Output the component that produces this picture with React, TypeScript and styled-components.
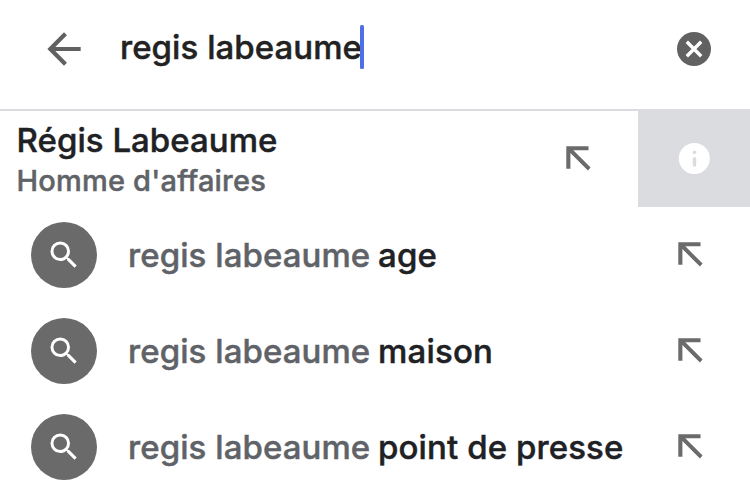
import React from 'react';
import styled, { createGlobalStyle } from 'styled-components';

const GlobalStyle = createGlobalStyle`
  * { box-sizing: border-box; }
  body { margin: 0; background: #fff; overflow: hidden; }
`;

const Screen = styled.main`
  width: 750px;
  height: 503px;
  background: #fff;
  color: #202124;
  font-family: Inter, 'Liberation Sans', sans-serif;
  font-size: 33px;
  font-weight: 500;
  -webkit-text-stroke: 0.45px currentColor;
`;

const SearchBar = styled.header`
  display: flex;
  align-items: flex-start;
  height: 111px;
  padding: 24px 36px 0 39px;
  border-bottom: 2px solid #dadce0;
`;

const IconButton = styled.button`
  display: flex;
  flex: none;
  padding: 0;
  border: 0;
  background: none;
`;

const ClearButton = styled(IconButton)`
  margin-top: 5px;
`;

const Query = styled.div`
  display: flex;
  flex: 1;
  align-items: center;
  height: 44px;
  margin: 1px 0 0 31px;
  color: #222;
  line-height: 44px;
  white-space: nowrap;
`;

const QueryText = styled.span`
  width: 240px;
  letter-spacing: 0.05px;
`;

const Caret = styled.span`
  position: relative;
  width: 4px;
  height: 44px;
  border-radius: 1.5px;
  background: #4f6fe6;
`;

const Row = styled.div`
  display: flex;
  align-items: center;
  height: 96px;
`;

const EntityText = styled.div`
  flex: 1;
  padding: 2px 0 0 16.5px;
  white-space: nowrap;
`;

const EntityName = styled.div`
  line-height: 42px;
  letter-spacing: 0.04px;
`;

const EntityKind = styled.div`
  color: #5f6368;
  font-size: 29px;
  line-height: 40px;
  letter-spacing: 0.2px;
`;

const InfoButton = styled.button`
  display: flex;
  align-items: center;
  justify-content: center;
  width: 112px;
  height: 96px;
  margin-left: 46px;
  padding: 0;
  border: 0;
  background: #dadce0;
`;

const SuggestionRow = styled(Row)`
  padding: 0 46px 0 31px;
`;

const Disc = styled.span`
  display: flex;
  flex: none;
  align-items: center;
  justify-content: center;
  width: 66px;
  height: 66px;
  border-radius: 50%;
  background: #6a6a6a;
`;

const SuggestionText = styled.div`
  display: flex;
  flex: 1;
  margin-left: 31px;
  line-height: 44px;
  white-space: pre;
`;

const Typed = styled.span`
  width: 250px;
  color: #5f6368;
  letter-spacing: 0.07px;
`;

const Completion = styled.span<{ $tracking: number }>`
  letter-spacing: ${(p) => p.$tracking}px;
`;

const InsertArrow = () => (
  <svg width="26" height="26" viewBox="0 0 26 26">
    <path fill="#6b6b6b" d="M.3 .3h22.2v4H7.3l17.3 17.3-2.7 2.8L4.4 7.1v15.7H.3z" />
  </svg>
);

const BackArrow = () => (
  <svg width="50" height="50" viewBox="0 0 24 24">
    <path fill="#616161" d="M20 11H7.83l5.59-5.59L12 4l-8 8 8 8 1.41-1.41L7.83 13H20v-2z" />
  </svg>
);

const ClearIcon = () => (
  <svg width="40" height="40" viewBox="0 0 40 40">
    <circle cx="20" cy="20" r="17" fill="#616161" />
    <path d="M12.8 12.8l14.4 14.4M27.2 12.8L12.8 27.2" stroke="#fff" strokeWidth="3.4" />
  </svg>
);

const SearchIcon = () => (
  <svg width="36" height="36" viewBox="0 0 24 24">
    <path
      fill="#fff"
      d="M15.5 14h-.79l-.28-.27A6.47 6.47 0 0 0 16 9.5 6.5 6.5 0 1 0 9.5 16c1.61 0 3.09-.59 4.23-1.57l.27.28v.79l5 4.99L20.49 19l-4.99-5zm-6 0C7.01 14 5 11.99 5 9.5S7.01 5 9.5 5 14 7.01 14 9.5 11.99 14 9.5 14z"
    />
  </svg>
);

const InfoIcon = () => (
  <svg width="32" height="32" viewBox="0 0 32 32">
    <circle cx="16.3" cy="15.5" r="15.5" fill="#fff" />
    <circle cx="16.5" cy="9.3" r="1.8" fill="#dadce0" />
    <path d="M16.5 15.8v6.2" stroke="#dadce0" strokeWidth="3.4" strokeLinecap="round" />
  </svg>
);

const suggestions = [
  { text: 'age', tracking: 0.2 },
  { text: 'maison', tracking: 0.2 },
  { text: 'point de presse', tracking: 0.1 },
];

export default function App() {
  return (
    <Screen>
      <GlobalStyle />
      <SearchBar>
        <IconButton aria-label="Retour"><BackArrow /></IconButton>
        <Query>
          <QueryText>regis labeaume</QueryText>
          <Caret />
        </Query>
        <ClearButton aria-label="Effacer"><ClearIcon /></ClearButton>
      </SearchBar>
      <Row>
        <EntityText>
          <EntityName>Régis Labeaume</EntityName>
          <EntityKind>Homme d'affaires</EntityKind>
        </EntityText>
        <InsertArrow />
        <InfoButton aria-label="Informations"><InfoIcon /></InfoButton>
      </Row>
      {suggestions.map((s) => (
        <SuggestionRow key={s.text}>
          <Disc><SearchIcon /></Disc>
          <SuggestionText>
            <Typed>regis labeaume </Typed>
            <Completion $tracking={s.tracking}>{s.text}</Completion>
          </SuggestionText>
          <InsertArrow />
        </SuggestionRow>
      ))}
    </Screen>
  );
}
